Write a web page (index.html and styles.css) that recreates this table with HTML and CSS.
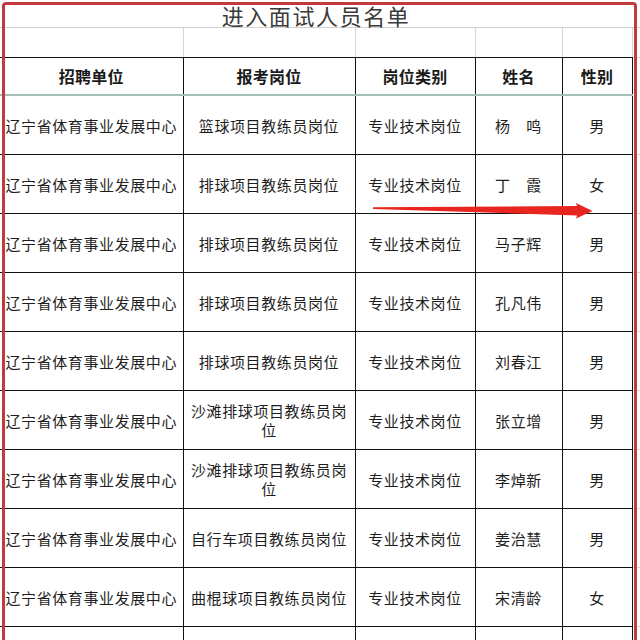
FILE: index.html
```html
<!DOCTYPE html>
<html lang="zh">
<head>
<meta charset="utf-8">
<link rel="stylesheet" href="styles.css">
</head>
<body>
<div class="sheet">
  <table class="grid">
    <colgroup>
      <col class="c1"><col class="c2"><col class="c3"><col class="c4"><col class="c5"><col class="c6">
    </colgroup>
    <tr class="title-row"><td colspan="5" class="title">进入面试人员名单</td><td class="pad"></td></tr>
    <tr class="blank-row"><td></td><td></td><td></td><td></td><td></td><td class="pad"></td></tr>
    <tr class="head-row"><th>招聘单位</th><th>报考岗位</th><th>岗位类别</th><th>姓名</th><th>性别</th><td class="pad"></td></tr>
    <tr class="data-row first"><td>辽宁省体育事业发展中心</td><td>篮球项目教练员岗位</td><td>专业技术岗位</td><td>杨　鸣</td><td>男</td><td class="pad"></td></tr>
    <tr class="data-row"><td>辽宁省体育事业发展中心</td><td>排球项目教练员岗位</td><td>专业技术岗位</td><td>丁　霞</td><td>女</td><td class="pad"></td></tr>
    <tr class="data-row"><td>辽宁省体育事业发展中心</td><td>排球项目教练员岗位</td><td>专业技术岗位</td><td>马子辉</td><td>男</td><td class="pad"></td></tr>
    <tr class="data-row"><td>辽宁省体育事业发展中心</td><td>排球项目教练员岗位</td><td>专业技术岗位</td><td>孔凡伟</td><td>男</td><td class="pad"></td></tr>
    <tr class="data-row"><td>辽宁省体育事业发展中心</td><td>排球项目教练员岗位</td><td>专业技术岗位</td><td>刘春江</td><td>男</td><td class="pad"></td></tr>
    <tr class="data-row"><td>辽宁省体育事业发展中心</td><td class="wrap">沙滩排球项目教练员岗位</td><td>专业技术岗位</td><td>张立增</td><td>男</td><td class="pad"></td></tr>
    <tr class="data-row"><td>辽宁省体育事业发展中心</td><td class="wrap">沙滩排球项目教练员岗位</td><td>专业技术岗位</td><td>李焯新</td><td>男</td><td class="pad"></td></tr>
    <tr class="data-row"><td>辽宁省体育事业发展中心</td><td>自行车项目教练员岗位</td><td>专业技术岗位</td><td>姜治慧</td><td>男</td><td class="pad"></td></tr>
    <tr class="data-row"><td>辽宁省体育事业发展中心</td><td>曲棍球项目教练员岗位</td><td>专业技术岗位</td><td>宋清龄</td><td>女</td><td class="pad"></td></tr>
    <tr class="tail-row"><td></td><td></td><td></td><td></td><td></td><td class="pad"></td></tr>
  </table>
  <div class="frame"></div>
  <svg class="arrow" width="640" height="640" viewBox="0 0 640 640">
    <polygon points="373,207.2 577,206 576,203 592.5,211 576,218.5 577,215.5 373,209" fill="#e8261f"/>
  </svg>
</div>
</body>
</html>
```
FILE: styles.css
```css
html, body {
  margin: 0;
  padding: 0;
  background: #ffffff;
}
.sheet {
  position: relative;
  width: 640px;
  height: 640px;
  overflow: hidden;
  font-family: "Noto Sans CJK SC", "Noto Sans", sans-serif;
  color: #222;
}
.grid {
  border-collapse: collapse;
  table-layout: fixed;
  width: 640px;
}
.c1 { width: 183px; }
.c2 { width: 172px; }
.c3 { width: 120px; }
.c4 { width: 87px; }
.c5 { width: 70px; }
.c6 { width: 8px; }
.grid td, .grid th {
  padding: 0;
  text-align: center;
  vertical-align: middle;
  white-space: nowrap;
  overflow: hidden;
}
.title-row td {
  height: 27px;
  line-height: 27px;
  border-bottom: 1px solid #d2d2d2;
}
.grid .title {
  font-size: 22px;
  letter-spacing: 1.6px;
  color: #3a3a3a;
  font-weight: 400;
  height: 24px;
  line-height: 24px;
  padding-top: 3px;
  overflow: visible;
}
.blank-row td {
  height: 29px;
  border-left: 1px solid #d6d6d6;
  border-right: 1px solid #d6d6d6;
  border-bottom: 1px solid #111;
}
.blank-row td:first-child { border-left: none; }
.head-row th {
  height: 36px;
  font-size: 16px;
  font-weight: 700;
  letter-spacing: 0.3px;
  color: #1a1a1a;
  border-left: 1px solid #111;
  border-right: 1px solid #111;
  border-bottom: 2px solid #a5beb7;
}
.head-row th:first-child { border-left: none; }
.data-row td {
  height: 58px;
  font-size: 15px;
  letter-spacing: 0.6px;
  line-height: 19px;
  color: #1e1e1e;
  border-left: 1px solid #111;
  border-right: 1px solid #111;
  border-bottom: 1px solid #111;
}
.data-row td:first-child { border-left: none; }
.data-row td.wrap {
  white-space: normal;
  padding: 0 6px;
}
.tail-row td {
  height: 14px;
  border-left: 1px solid #111;
  border-right: 1px solid #111;
}
.tail-row td:first-child { border-left: none; }
.grid td.pad {
  border-left: 1px solid #222;
  border-right: 1px solid #d6d6d6;
  border-bottom-color: #d6d6d6;
}
.title-row td.pad { border-left: none; border-bottom: 1px solid #d2d2d2; }
.blank-row td.pad { border-left: 1px solid #d6d6d6; border-bottom: 1px solid #d6d6d6; }
.frame {
  position: absolute;
  left: 2px;
  top: 2px;
  width: 635px;
  height: 700px;
  border: 3px solid #c23a3c;
  border-radius: 4px;
  box-sizing: border-box;
  pointer-events: none;
}
.arrow {
  position: absolute;
  left: 0;
  top: 0;
  pointer-events: none;
}
```
